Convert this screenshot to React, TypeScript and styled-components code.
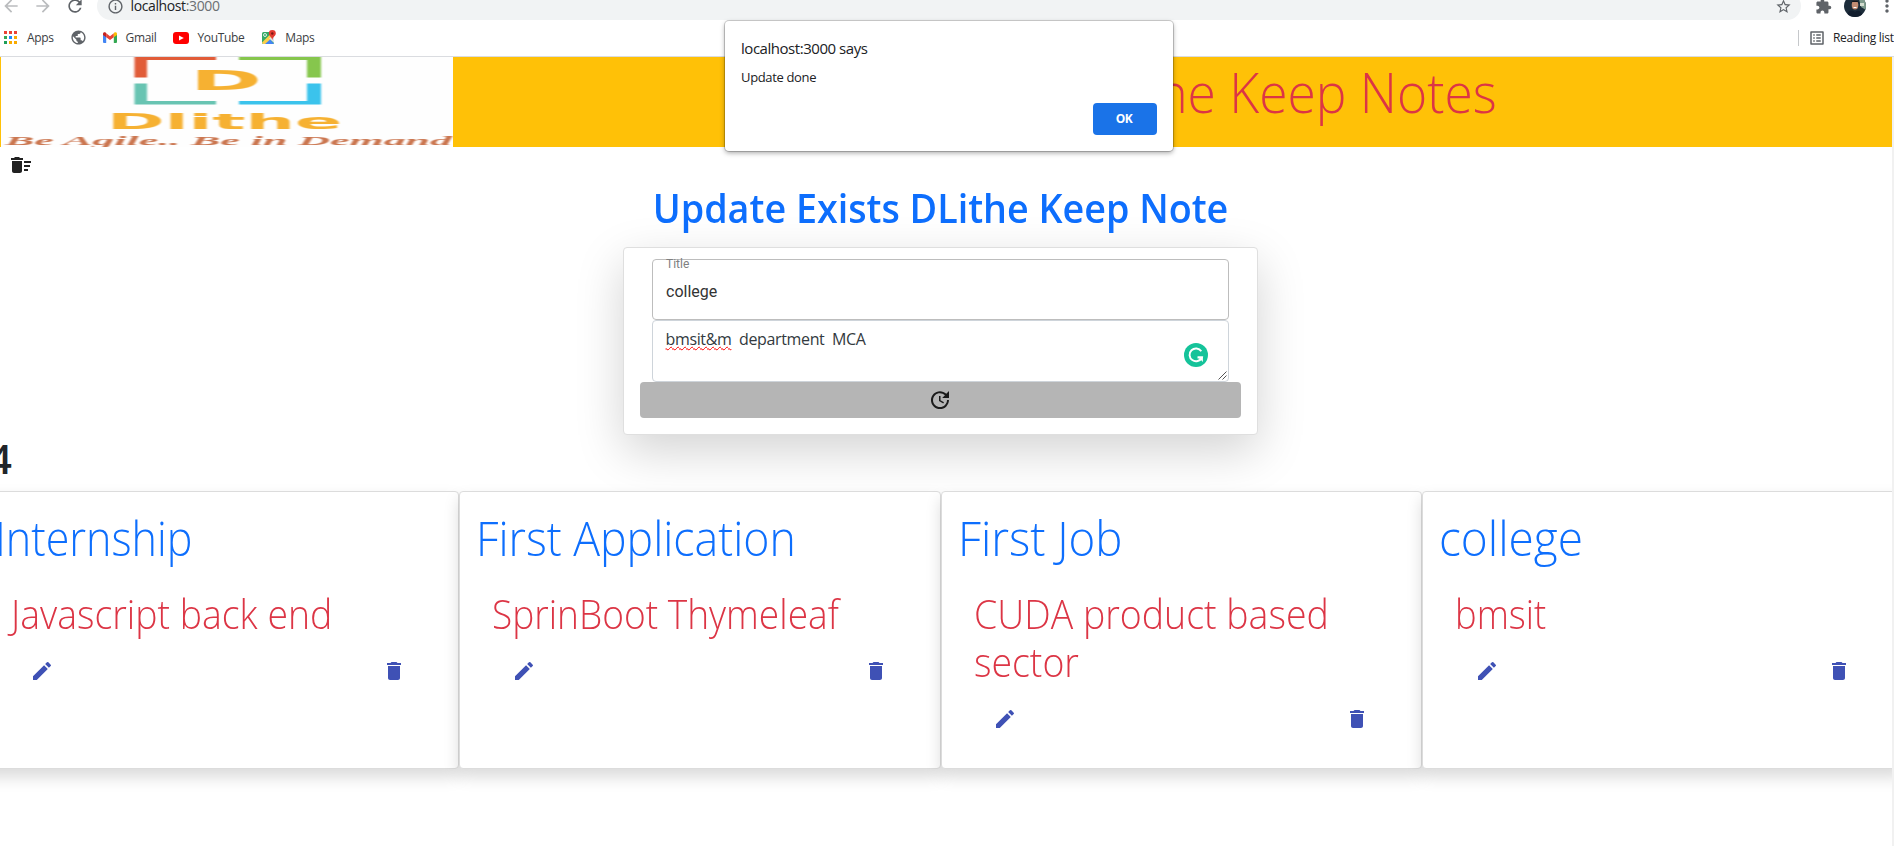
import React from 'react';
import styled, { createGlobalStyle } from 'styled-components';
import {
  MdArrowBack,
  MdArrowForward,
  MdDelete,
  MdDeleteSweep,
  MdEdit,
  MdExtension,
  MdInfoOutline,
  MdListAlt,
  MdMoreVert,
  MdPublic,
  MdRefresh,
  MdStarBorder,
  MdUpdate,
} from 'react-icons/md';

const GlobalStyle = createGlobalStyle`
  * { box-sizing: border-box; }
  body { margin: 0; background: #fff; overflow: hidden; }
`;

const Window = styled.div`
  position: relative;
  width: 1894px;
  height: 846px;
  overflow: hidden;
  display: flex;
  flex-direction: column;
  background: #fff;
  color: #212529;
  font-family: 'Open Sans', sans-serif;
`;

/* Browser chrome */

const AddressRow = styled.div`
  flex: none;
  display: flex;
  align-items: center;
  height: 28px;
  margin-top: -8px;
  color: #5f6368;
  svg { display: block; flex: none; }
`;

const NavButtons = styled.div`
  flex: none;
  display: flex;
  align-items: center;
  gap: 12px;
  width: 97px;
  padding-left: 1px;
`;

const AddressBar = styled.div`
  flex: none;
  display: flex;
  align-items: center;
  width: 1704px;
  height: 28px;
  padding: 0 9px 0 9.5px;
  border-radius: 14px;
  background: #f1f3f4;
`;

const Url = styled.span`
  flex: 1;
  padding-left: 7px;
  font-size: 14px;
  line-height: 20px;
  letter-spacing: -0.38px;
  color: #202124;
  em { font-style: normal; color: #6b6f73; }
`;

const ChromeActions = styled.div`
  flex: none;
  display: flex;
  align-items: center;
  padding-left: 14px;
`;

const Avatar = styled.svg`
  margin: 0 11px 0 12px;
`;

const BookmarkBar = styled.div`
  flex: none;
  display: flex;
  align-items: center;
  justify-content: space-between;
  height: 37px;
  padding: 0 0 1px 4px;
  border-bottom: 1px solid #dadce0;
  svg { display: block; flex: none; }
`;

const Bookmarks = styled.div`
  display: flex;
  align-items: center;
`;

const Bookmark = styled.div<{ $after?: number; $gap?: number }>`
  display: flex;
  align-items: center;
  gap: ${(p) => p.$gap ?? 10}px;
  margin-right: ${(p) => p.$after ?? 16}px;
  font-size: 12px;
  line-height: 16px;
  letter-spacing: -0.35px;
  white-space: nowrap;
  color: #3c4043;
`;

const ReadingList = styled(Bookmark)`
  width: 96px;
  height: 16px;
  margin: 0;
  padding-left: 9px;
  border-left: 1px solid #c6c8cb;
  color: #202124;
  letter-spacing: -0.3px;
`;

/* Page */

const Viewport = styled.div`
  flex: 1;
  min-height: 0;
  display: flex;
`;

const Page = styled.main`
  width: 1892px;
  overflow: hidden;
`;

const ScrollTrack = styled.div`
  width: 2px;
  background: #f1f1f1;
`;

const Header = styled.header`
  display: flex;
  justify-content: space-between;
  height: 90px;
  padding-left: 1px;
  background: #ffc107;
`;

const Squeezed = styled.div<{ $fit: number; $origin?: string }>`
  transform: scaleX(${(p) => p.$fit});
  transform-origin: ${(p) => p.$origin ?? 'left'} center;
`;

const Brand = styled(Squeezed)`
  padding: 1px 395px 0 0;
  font-size: 56px;
  font-weight: 300;
  line-height: 67px;
  white-space: nowrap;
  color: #dc3545;
  transform-origin: calc(100% - 395px) center;
`;

const SweepRow = styled.div`
  height: 36px;
  padding: 6px 9px;
  color: #212121;
  svg { display: block; }
`;

const Editor = styled.section`
  display: flex;
  flex-direction: column;
  align-items: center;
  padding-right: 11px;
`;

const EditorTitle = styled(Squeezed)`
  padding-top: 1px;
  margin-bottom: 15px;
  font-size: 40px;
  font-weight: 600;
  line-height: 48px;
  white-space: nowrap;
  color: #0d6efd;
`;

const EditorCard = styled.div`
  width: 635px;
  height: 188px;
  padding: 11px 16px;
  border: 1px solid #dfdfdf;
  border-radius: 4px;
  background: #fff;
  box-shadow: 0 16px 48px rgba(0, 0, 0, 0.175);
`;

const Field = styled.div`
  height: 61px;
  margin: 0 12px;
  padding: 0 13px;
  border: 1px solid #bdbdbd;
  border-radius: 4px;
  font-family: Roboto, sans-serif;
`;

const Label = styled.div`
  margin: -4px 0 10px;
  font-size: 12px;
  line-height: 16px;
  color: #808080;
`;

const Value = styled.div`
  font-size: 16px;
  line-height: 20px;
  color: #333;
`;

const NoteArea = styled.div`
  position: relative;
  height: 62px;
  margin: 0 12px;
  padding: 6px 12px 6px 12.5px;
  border: 1px solid #ced4da;
  border-radius: 4px;
  font-size: 16px;
  line-height: 24px;
  letter-spacing: -0.36px;
  white-space: pre;
  color: #333a40;
`;

const Misspelt = styled.span`
  text-decoration: underline wavy #f00 1px;
  text-underline-offset: 1px;
  text-decoration-skip-ink: none;
`;

const GrammarBadge = styled.svg`
  position: absolute;
  right: 20px;
  top: 22px;
`;

const ResizeGrip = styled.svg`
  position: absolute;
  right: 1px;
  bottom: 1px;
`;

const UpdateButton = styled.button`
  display: flex;
  align-items: center;
  justify-content: center;
  width: 100%;
  height: 36px;
  padding: 0 1px 0 0;
  border: 0;
  border-radius: 4px;
  background: #b5b5b5;
  color: #1b1b1b;
`;

const Count = styled.h1`
  margin: 0 0 8px -11px;
  font-size: 40px;
  font-weight: 600;
  line-height: 48px;
`;

const NoteGrid = styled.section`
  display: grid;
  grid-template-columns: repeat(4, 481.6px);
  margin-left: -22.5px;
`;

const NoteCard = styled.article`
  height: 278px;
  padding: 16px;
  border: 1px solid #dcdcdc;
  border-radius: 4px;
  background: #fff;
  box-shadow: 0 8px 16px rgba(0, 0, 0, 0.15);
`;

const NoteTitle = styled(Squeezed)`
  font-size: 48px;
  font-weight: 300;
  line-height: 59px;
  white-space: nowrap;
  color: #0d6efd;
`;

const NoteText = styled(Squeezed)`
  width: 400px;
  margin: 23px 0 21px 16px;
  font-size: 40px;
  font-weight: 300;
  line-height: 48px;
  color: #dc3545;
`;

const NoteActions = styled.div`
  display: flex;
  gap: 328px;
  padding-left: 35.7px;
  color: #3f51b5;
  svg { display: block; }
`;

/* Alert */

const Alert = styled.div`
  position: absolute;
  left: 725px;
  top: 21px;
  width: 448px;
  height: 130px;
  padding: 17px 16px;
  border-radius: 4px;
  background: #fff;
  box-shadow: 0 0 0 1px rgba(0, 0, 0, 0.18), 0 2px 5px rgba(0, 0, 0, 0.35);
  color: #202124;
`;

const AlertTitle = styled.div`
  margin-bottom: 10px;
  font-size: 15px;
  line-height: 20px;
  letter-spacing: -0.46px;
`;

const AlertText = styled.div`
  font-size: 13px;
  line-height: 18px;
  letter-spacing: -0.35px;
`;

const OkButton = styled.button`
  display: block;
  width: 64px;
  height: 32px;
  margin: 17px 0 0 auto;
  padding: 0 2px 2px 0;
  border: 0;
  border-radius: 4px;
  background: #1a73e8;
  color: #fff;
  font: 700 12px 'Open Sans', sans-serif;
  letter-spacing: -0.4px;
`;

const appColors = ['#ea4335', '#ea4335', '#ea4335', '#34a853', '#1a8cff', '#f9ab00', '#1e9e58', '#f9ab00', '#f9ab00'];

const AppsIcon = () => (
  <svg width="13" height="13" viewBox="0 0 13 13">
    {appColors.map((c, i) => (
      <rect key={i} x={(i % 3) * 5} y={Math.floor(i / 3) * 5} width="3" height="3" fill={c} />
    ))}
  </svg>
);

const GmailIcon = () => (
  <svg width="14" height="11" viewBox="0 0 14 11">
    <path d="M0 2v8a1 1 0 0 0 1 1h2.2V4.2z" fill="#4285f4" />
    <path d="M14 2v8a1 1 0 0 1-1 1h-2.2V4.2z" fill="#34a853" />
    <path d="M3.2 1.2 7 4.2l3.8-3v4L7 8 3.2 5.2z" fill="#ea4335" />
    <path d="M0 1.7C0 .2 1.6-.3 2.6.6l.6.6v4L0 2.9z" fill="#c5221f" />
    <path d="M14 1.7C14 .2 12.4-.3 11.4.6l-.6.6v4L14 2.9z" fill="#fbbc04" />
  </svg>
);

const YouTubeIcon = () => (
  <svg width="16" height="12" viewBox="0 0 16 12">
    <rect width="16" height="12" rx="3" fill="#f00" />
    <path d="M6 3.4v5.2L10.8 6z" fill="#fff" />
  </svg>
);

const MapsIcon = () => (
  <svg width="15" height="15" viewBox="0 0 15 15">
    <rect x="1" y="2" width="12" height="12" rx="1.5" fill="#34a865" />
    <path d="M2 14 8 8l5 6z" fill="#4285f4" />
    <path d="M1 12.5 11.5 2 13 4v2L4 14H2z" fill="#fbd04a" />
    <path d="M8 8.2 13 13V6z" fill="#dfe3e8" />
    <circle cx="4" cy="5" r="1.5" fill="none" stroke="#fff" strokeWidth=".8" />
    <path d="M11.3 0a3.5 3.5 0 0 1 3.5 3.6c0 2.3-2.7 3.2-3.5 6.4-.8-3.2-3.5-4.1-3.5-6.4A3.5 3.5 0 0 1 11.3 0z" fill="#e33b31" />
    <circle cx="11.3" cy="3.5" r="1.2" fill="#7d1712" />
  </svg>
);

const Logo = () => (
  <svg width="452" height="90" viewBox="1 0 452 90">
    <defs>
      <filter id="soft" x="-5%" y="-5%" width="110%" height="110%">
        <feGaussianBlur stdDeviation="1.3 0.35" />
      </filter>
    </defs>
    <rect x="1" width="452" height="90" fill="#fefefe" />
    <g filter="url(#soft)">
      <path d="M134.5-5H216v8h-69v17.500h-12.500z" fill="#e15b39" />
      <path d="M321-5h-82v8h68v17.500h14z" fill="#86c64d" />
      <path d="M134.5 26.5H147V44h69v3.500h-81.500z" fill="#67c4b2" />
      <path d="M321 26.5h-14V44h-68v3.500h82z" fill="#3ac3ec" />
      <g fill="#f6b132" fontFamily="'DejaVu Sans', sans-serif" fontWeight="700">
        <text x="190" y="33" fontSize="26.5" textLength="72" lengthAdjust="spacingAndGlyphs">D</text>
        <text x="107" y="72" fontSize="21" textLength="235" lengthAdjust="spacingAndGlyphs">Dlithe</text>
      </g>
      <text x="5" y="87.5" fontSize="12.5" fontFamily="'Liberation Serif', serif" fontWeight="700" fontStyle="italic" fill="#cb7650" textLength="447" lengthAdjust="spacingAndGlyphs">
        Be Agile.. Be in Demand
      </text>
    </g>
  </svg>
);

const notes = [
  { title: 'Internship', text: 'Javascript back end', titleFit: 0.897, textFit: 0.935 },
  { title: 'First Application', text: 'SprinBoot Thymeleaf', titleFit: 0.93, textFit: 0.927 },
  { title: 'First Job', text: 'CUDA product based sector', titleFit: 0.95, textFit: 0.937 },
  { title: 'college', text: 'bmsit', titleFit: 0.958, textFit: 0.91 },
];

export default function App() {
  return (
    <Window>
      <GlobalStyle />
      <AddressRow>
        <NavButtons>
          <MdArrowBack size={20} color="#babcbe" />
          <MdArrowForward size={20} color="#babcbe" />
          <MdRefresh size={20} />
        </NavButtons>
        <AddressBar>
          <MdInfoOutline size={17} />
          <Url>
            localhost<em>:3000</em>
          </Url>
          <MdStarBorder size={17} />
        </AddressBar>
        <ChromeActions>
          <MdExtension size={17} />
          <Avatar width="22" height="22" viewBox="0 0 22 22">
            <defs>
              <clipPath id="avatar">
                <circle cx="11" cy="11" r="11" />
              </clipPath>
            </defs>
            <g clipPath="url(#avatar)">
              <rect width="22" height="22" fill="#1c2c3a" />
              <path d="M14 0h8v15l-5-3z" fill="#7e9a8c" />
              <path d="M16 8h4v3h-4z" fill="#d3dccf" />
              <ellipse cx="11" cy="10" rx="3.3" ry="4.5" fill="#c08b72" />
              <path d="M7 9c0-5 8-5 8 0l-1-2H8z" fill="#10151c" />
              <path d="M9.5 12h3v1h-3z" fill="#fff" />
              <path d="M3 22c1-8 5-7 8-5 4-3 7 0 8 5z" fill="#121e2e" />
            </g>
          </Avatar>
          <MdMoreVert size={20} />
        </ChromeActions>
      </AddressRow>
      <BookmarkBar>
        <Bookmarks>
          <Bookmark $after={16}>
            <AppsIcon />
            Apps
          </Bookmark>
          <Bookmark $after={16}>
            <MdPublic size={17} color="#5f6368" />
          </Bookmark>
          <Bookmark $after={17} $gap={9}>
            <GmailIcon />
            Gmail
          </Bookmark>
          <Bookmark $after={17} $gap={8}>
            <YouTubeIcon />
            YouTube
          </Bookmark>
          <Bookmark $gap={9}>
            <MapsIcon />
            Maps
          </Bookmark>
        </Bookmarks>
        <ReadingList $gap={7}>
          <MdListAlt size={18} color="#5f6368" />
          Reading list
        </ReadingList>
      </BookmarkBar>

      <Viewport>
        <Page>
          <Header>
            <Logo />
            <Brand $fit={0.92}>DLithe Keep Notes</Brand>
          </Header>
          <SweepRow>
            <MdDeleteSweep size={24} />
          </SweepRow>
          <Editor>
            <EditorTitle $fit={0.942} $origin="center">
              Update Exists DLithe Keep Note
            </EditorTitle>
            <EditorCard>
              <Field>
                <Label>Title</Label>
                <Value>college</Value>
              </Field>
              <NoteArea>
                <Misspelt>bmsit&amp;m</Misspelt>
                {'  department  MCA'}
                <GrammarBadge width="24" height="24" viewBox="0 0 24 24">
                  <circle cx="12" cy="12" r="12" fill="#15c39a" />
                  <path d="M17.3 8.3A6.4 6.4 0 1 0 17.8 14.5H13.5" fill="none" stroke="#fff" strokeWidth="1.9" />
                  <path d="M13.5 13.6h5.4v5.4z" fill="#fff" />
                </GrammarBadge>
                <ResizeGrip width="9" height="9" viewBox="0 0 9 9">
                  <path d="M.5 8.5l8-8M4.5 8.5l4-4" stroke="#555" strokeWidth="1" />
                </ResizeGrip>
              </NoteArea>
              <UpdateButton>
                <MdUpdate size={24} />
              </UpdateButton>
            </EditorCard>
          </Editor>
          <Count>4</Count>
          <NoteGrid>
            {notes.map((n) => (
              <NoteCard key={n.title}>
                <NoteTitle $fit={n.titleFit}>{n.title}</NoteTitle>
                <NoteText $fit={n.textFit}>{n.text}</NoteText>
                <NoteActions>
                  <MdEdit size={24} />
                  <MdDelete size={24} />
                </NoteActions>
              </NoteCard>
            ))}
          </NoteGrid>
        </Page>
        <ScrollTrack />
      </Viewport>

      <Alert role="alertdialog">
        <AlertTitle>localhost:3000 says</AlertTitle>
        <AlertText>Update done</AlertText>
        <OkButton>OK</OkButton>
      </Alert>
    </Window>
  );
}
